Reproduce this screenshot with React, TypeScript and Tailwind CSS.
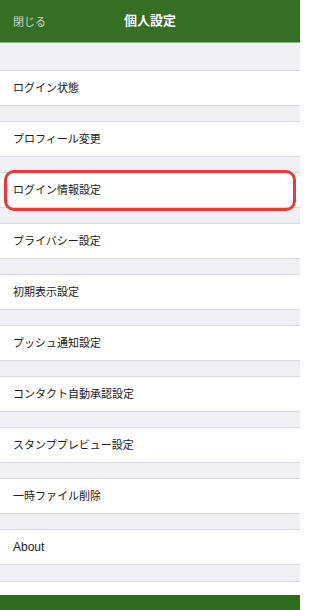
const items = [
  "ログイン状態",
  "プロフィール変更",
  "ログイン情報設定",
  "プライバシー設定",
  "初期表示設定",
  "プッシュ通知設定",
  "コンタクト自動承認設定",
  "スタンププレビュー設定",
  "一時ファイル削除",
  "About",
];

export default function App() {
  return (
    <div
      className="w-[300px] h-[610px] overflow-hidden flex flex-col bg-[#efeff4]"
      style={{ fontFamily: '"Liberation Sans", "Noto Sans CJK JP", sans-serif' }}
    >
      {/* ヘッダー */}
      <div className="relative h-[43px] shrink-0 bg-[#356f24] border-b border-[#8fae84] flex items-center justify-center">
        <span className="absolute left-[13px] top-[14px] text-[11px] text-[#c9d6c3]">閉じる</span>
        <span className="text-[13px] font-bold text-white">個人設定</span>
      </div>

      <div className="flex-1 flex flex-col pt-[27px]">
        {items.map((label, i) => (
          <div key={label} className={i === 0 ? "relative" : "relative mt-[15px]"}>
            <div
              className={`h-[36px] bg-white border-y border-[#d9d9de] flex items-center pl-[13px] text-[#222] ${
                label === "About" ? "text-[12px]" : "text-[11px]"
              }`}
            >
              {label}
            </div>
            {i === 2 && (
              <div className="absolute left-[4px] right-[4px] top-[-2px] bottom-[-3px] rounded-[10px] border-[3px] border-[#ea3c34]" />
            )}
          </div>
        ))}
        <div className="mt-[16px] flex-1 bg-white border-t border-[#d9d9de]" />
      </div>

      {/* フッター */}
      <div className="h-[15px] shrink-0 bg-[#2f6b1e]" />
    </div>
  );
}
